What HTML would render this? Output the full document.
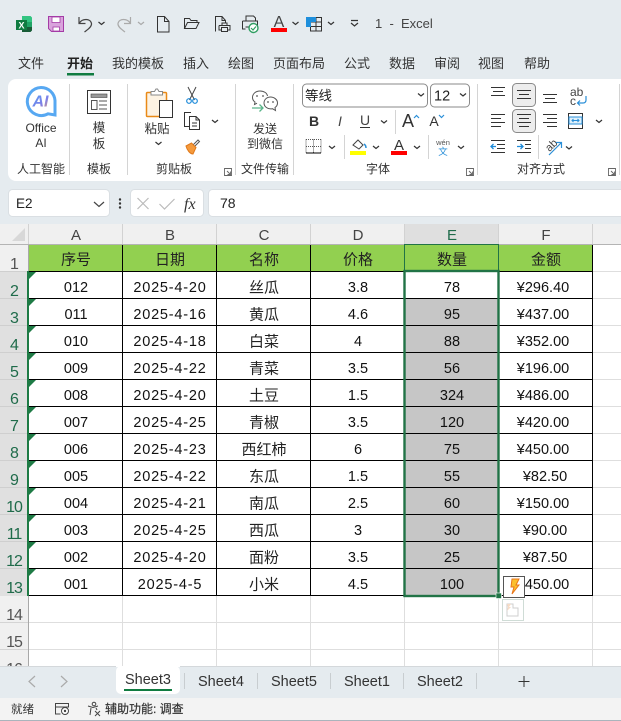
<!DOCTYPE html>
<html><head><meta charset="utf-8"><style>
html,body{margin:0;padding:0;background:#fff;width:621px;height:721px;overflow:hidden}
svg{display:block;position:absolute;left:0;top:0}
text{font-family:"Liberation Sans","Noto Sans CJK SC",sans-serif;fill:#222}
.u{font-size:13px;fill:#333}
.g{font-size:12px;fill:#333}
.c{font-size:14.5px;fill:#111;text-anchor:middle}
.d{letter-spacing:.8px}
.h{font-size:15px;fill:#222;text-anchor:middle}
.r{font-size:16px;letter-spacing:-1px;text-anchor:middle;fill:#1f6b4a}
.n{fill:#555}
.ch{fill:none;stroke:#333;stroke-width:1.2}
.ln{fill:none;stroke:#333;stroke-width:1}
.bk{stroke:#000;stroke-width:1;fill:none}
.gl{stroke:#dedede;stroke-width:1;fill:none}
</style></head><body>
<svg width="621" height="721" viewBox="0 0 621 721" xmlns="http://www.w3.org/2000/svg">
<defs><linearGradient id="ai" x1="0" y1="0" x2="1" y2="1"><stop offset="0" stop-color="#4f9df2"/><stop offset=".6" stop-color="#7f7fe8"/><stop offset="1" stop-color="#e9a06a"/></linearGradient></defs>
<rect width="621" height="224" fill="#e5ebef"/>

<!-- QAT -->
<path d="M22 16h8.500l1.500 1.500v4.500h-10z" fill="#33c481"/><path d="M22 22h10v5h-10z" fill="#21a366"/><path d="M22 27h10v3.500l-1.500 1.500h-8.500z" fill="#185c37"/>
<rect x="16" y="20" width="11" height="10" fill="#107c41"/>
<text x="18.500" y="28.500" style="font-size:9px;font-weight:bold;fill:#fff">X</text>
<path d="M48.500 16.500h15v15h-12l-3-3z" fill="#d9a3dc" stroke="#a43ba6"/>
<rect x="52" y="17" width="8" height="5.500" fill="#fff" stroke="#a43ba6" stroke-width=".8"/>
<rect x="53" y="27" width="6.500" height="4" fill="#fff" stroke="#a43ba6" stroke-width=".8"/>
<path d="M79 17v6.500h6.500M79.500 23C82 18.500 90.500 18 91.500 23.500 92 27 87 30 84.500 32" fill="none" stroke="#444" stroke-width="1.200"/>
<path d="M98.500 22l3 2.500 3-2.500" class="ch"/>
<path d="M130.500 17v6.500h-6.500M130 23C127.500 18.500 119 18 118 23.500 117.500 27 122.500 30 125 32" fill="none" stroke="#aaa" stroke-width="1.200"/>
<path d="M138 22l3 2.500 3-2.500" fill="none" stroke="#aaa" stroke-width="1.200"/>
<path d="M157.500 16.500h7l4.500 5v10.500h-11.500zM164.500 16.500v5h4.500" class="ln"/>
<path d="M184.500 28.500v-10h5l1.500 2h6v2.500M184.500 28.500l3-6h11.500l-3 6z" class="ln"/>
<path d="M215.500 31.500v-15h6.500l3.500 4v3M222 16.500v4h3.500M219 25.500h11v4.500h-2.500M219 25.500v4.500h2.500M221.500 27.500h6v4h-6zM222 25.500v-2.500h5v2.500" class="ln"/>
<path d="M246 21v-5h7.500l2 2v3M242.500 21h15v5M242.500 21v8h3M245.500 27h4" class="ln"/>
<circle cx="253.500" cy="28" r="4.500" fill="#fff" stroke="#2f9e62" stroke-width="1.400"/><path d="M251 28l2 2 3-3.500" fill="none" stroke="#2f9e62" stroke-width="1.200"/>
<text x="279" y="27" style="font-size:16px;fill:#444;text-anchor:middle">A</text>
<rect x="271" y="28" width="16" height="4" fill="#f00"/>
<path d="M292.500 22l3 2.500 3-2.500" class="ch"/>
<path d="M310.500 17.500h11v13.500h-11zM310.500 22h11M310.500 26.500h11M316 17.500v13.500" fill="none" stroke="#333"/>
<path d="M306 17h10v5h-5v5h-5z" fill="#1e8fdc"/>
<path d="M328 22l3 2.500 3-2.500" class="ch"/>
<path d="M351 20.500h7M351 23l3.500 3 3.500-3" class="ch"/>
<text x="375" y="28" style="font-size:13px;fill:#444" xml:space="preserve">1  -  Excel</text>

<!-- menu -->
<text class="u" x="18" y="68">文件</text><text class="u" x="67" y="68" style="font-weight:bold;fill:#222">开始</text><text class="u" x="112" y="68">我的模板</text><text class="u" x="183" y="68">插入</text><text class="u" x="228" y="68">绘图</text><text class="u" x="273" y="68">页面布局</text><text class="u" x="344" y="68">公式</text><text class="u" x="389" y="68">数据</text><text class="u" x="434" y="68">审阅</text><text class="u" x="478" y="68">视图</text><text class="u" x="524" y="68">帮助</text>
<rect x="67" y="73" width="27" height="2.500" fill="#107c41"/>

<!-- ribbon card -->
<rect x="8" y="79" width="625" height="102" rx="8" fill="#fff"/>
<path d="M69.500 84v91M127.500 84v91M235.500 84v91M293.500 84v91M477.500 84v91M619.500 84v91" stroke="#d4d4d4" fill="none"/>
<path d="M395.500 110v24M344.500 135v24M428.500 135v24M538.500 135v24" stroke="#d4d4d4" fill="none"/>

<!-- Office AI -->
<path d="M41 87.500a14 14 0 1 0 7 26.300l7 1.200v-14.500a14 14 0 0 0-14-13z" fill="#fff" stroke="#57a8f2" stroke-width="3"/>
<text x="40.500" y="106.500" style="font-size:16px;font-weight:bold;font-style:italic;fill:url(#ai);text-anchor:middle">AI</text>
<text x="41" y="132" class="g" style="text-anchor:middle">Office</text>
<text x="41" y="147" class="g" style="text-anchor:middle">AI</text>
<text x="17" y="173" class="g">人工智能</text>
<!-- template -->
<rect x="87.500" y="90.500" width="23" height="23" fill="#fff" stroke="#333"/>
<rect x="91" y="94" width="16" height="3.500" fill="#999" stroke="#444" stroke-width=".6"/>
<rect x="91.500" y="100.500" width="5.500" height="9" fill="none" stroke="#555"/>
<path d="M99 101h8M99 105h8M99 109h8" stroke="#555" fill="none"/>
<text x="99" y="132" style="font-size:12.500px;fill:#333;text-anchor:middle">模</text>
<text x="99" y="148" style="font-size:12.500px;fill:#333;text-anchor:middle">板</text>
<text x="87" y="173" class="g">模板</text>
<!-- clipboard -->
<rect x="146.500" y="92.500" width="20" height="24" rx="1" fill="#fdf3e3" stroke="#e98a17" stroke-width="1.500"/>
<path d="M151 93.500v-2h3.500l1.500-2.500h1.500l1.500 2.500h3.500v3.500h-11.500z" fill="#fff" stroke="#888"/>
<rect x="159.500" y="100.500" width="13" height="17" fill="#fff" stroke="#333"/>
<text x="157" y="133" style="font-size:12.500px;fill:#333;text-anchor:middle">粘贴</text>
<path d="M155.500 142l3 2.500 3-2.500" class="ch"/>
<path d="M188 87l6.500 13M196 87l-6.500 13" stroke="#444" fill="none"/>
<circle cx="189" cy="101" r="2.300" fill="none" stroke="#1c8ad9" stroke-width="1.200"/><circle cx="195" cy="101" r="2.300" fill="none" stroke="#1c8ad9" stroke-width="1.200"/>
<path d="M189.500 126.500h-5v-14h6.500" class="ln"/><path d="M189.500 116.500h6.500l3.500 3.500v9.500h-10zM196 116.500v3.500h3.500M192 123h5M192 126h5" class="ln"/>
<path d="M212 120l3 2.500 3-2.500" class="ch"/>
<path d="M193 145l5-5 1.500 1.500-5 5z" fill="#fff" stroke="#555"/>
<path d="M186 146l5.500-3 4.500 4.500-3 6.500c-3 0-6-4-7-8z" fill="#f59a3c" stroke="#e0791a"/>
<text x="156" y="173" class="g">剪贴板</text>
<path d="M224.500 168.500h7v7h-7zM227 171l3 3M230.500 171.500v3h-3" fill="none" stroke="#666" stroke-width=".9"/>
<!-- wechat -->
<path d="M260 91c-4.500 0-7.500 3-7.500 6.500 0 2 1 3.500 2.500 4.500l-.5 2.500 2.500-1.300" fill="none" stroke="#555"/><path d="M260 91c4 0 7 2 7.500 5" fill="none" stroke="#555"/>
<circle cx="257" cy="96" r=".9" fill="#555"/><circle cx="263" cy="96" r=".9" fill="#555"/>
<path d="M270.500 97c3.500 0 7 2.500 7 6 0 2-1 3.500-2.500 4.500l.5 3-3-1.800c-4.500 1-8.500-2-8.500-5.700 0-3.500 3-6 6.500-6z" fill="#fff" stroke="#555"/>
<circle cx="268" cy="102" r=".9" fill="#555"/><circle cx="273" cy="102" r=".9" fill="#555"/>
<path d="M252 108h11M259.500 104.500l3.500 3.500-3.500 3.500" fill="none" stroke="#5ab58a" stroke-width="1.300"/>
<text x="265" y="133" style="font-size:12px;fill:#333;text-anchor:middle">发送</text>
<text x="265" y="148" style="font-size:12px;fill:#333;text-anchor:middle">到微信</text>
<text x="241" y="173" class="g">文件传输</text>

<!-- font -->
<rect x="302.500" y="84" width="125" height="23" rx="4" fill="#fff" stroke="#8a8a8a"/>
<text x="305" y="100.500" style="font-size:13.500px;fill:#222">等线</text>
<path d="M418 93.500l3 2.500 3-2.500" class="ch"/>
<rect x="430.500" y="84" width="39" height="23" rx="4" fill="#fff" stroke="#8a8a8a"/>
<text x="434" y="100.500" style="font-size:14.500px;fill:#222">12</text>
<path d="M460 93.500l3 2.500 3-2.500" class="ch"/>
<text x="314" y="126" style="font-size:14px;font-weight:bold;fill:#333;text-anchor:middle">B</text>
<text x="340" y="126" style="font-size:14px;font-style:italic;fill:#444;text-anchor:middle">I</text>
<text x="365" y="125" style="font-size:14px;fill:#444;text-anchor:middle">U</text><path d="M360 127.500h10" stroke="#333" fill="none"/>
<path d="M381 120.500l3 2.500 3-2.500" class="ch"/>
<text x="408" y="127" style="font-size:18px;fill:#333;text-anchor:middle">A</text><path d="M414 118l2.500-2.500 2.500 2.500" fill="none" stroke="#2a8fd8" stroke-width="1.200"/>
<text x="434" y="126" style="font-size:14px;fill:#333;text-anchor:middle">A</text><path d="M439 115l2.500 2.500 2.500-2.500" fill="none" stroke="#2a8fd8" stroke-width="1.200"/>
<path d="M306 139.500h15M306 146.500h15M306 139.500v13M321 139.500v13M313.500 139.500v13" fill="none" stroke="#555" stroke-dasharray="1 1"/><path d="M306 153h15" stroke="#000" fill="none"/>
<path d="M329 146l3 2.500 3-2.500" class="ch"/>
<path d="M353 145l5-5 5 5-4 4z" fill="#fff" stroke="#444"/><path d="M364 144c1.500 1 2 2.500 2 4" stroke="#2a8fd8" stroke-width="1.500" fill="none"/>
<rect x="350" y="151" width="16" height="4" fill="#ff0"/>
<path d="M373 146l3 2.500 3-2.500" class="ch"/>
<text x="399" y="150" style="font-size:15px;fill:#333;text-anchor:middle">A</text>
<rect x="391" y="151" width="16" height="4" fill="#f00"/>
<path d="M414 146l3 2.500 3-2.500" class="ch"/>
<text x="443" y="145" style="font-size:7.500px;fill:#555;text-anchor:middle">wén</text>
<text x="443" y="155" style="font-size:9.500px;fill:#2a8fd8;text-anchor:middle">文</text>
<path d="M458 146l3 2.500 3-2.500" class="ch"/>
<text x="366" y="173" class="g">字体</text>
<path d="M466.500 168.500h7v7h-7zM469 171l3 3M472.500 171.500v3h-3" fill="none" stroke="#666" stroke-width=".9"/>

<!-- align -->
<rect x="512.500" y="83.500" width="23" height="23" rx="4" fill="#ededed" stroke="#8a8a8a"/>
<rect x="512.500" y="109.500" width="23" height="23" rx="4" fill="#ededed" stroke="#8a8a8a"/>
<path d="M491 87.500h14M493 91.500h10M491 95.500h14" class="ln"/>
<path d="M517 90.500h14M519 94.500h10M517 98.500h14" class="ln"/>
<path d="M543 94.500h14M545 98.500h10M543 102.500h14" class="ln"/>
<path d="M491 114.500h14M491 118.500h10M491 122.500h14M491 126.500h10" class="ln"/>
<path d="M517 114.500h14M519 118.500h10M517 122.500h14M519 126.500h10" class="ln"/>
<path d="M543 114.500h14M547 118.500h10M543 122.500h14M547 126.500h10" class="ln"/>
<text x="570" y="96" style="font-size:12px;fill:#444">ab</text>
<text x="570" y="105" style="font-size:12px;fill:#444">c</text>
<path d="M586 96v4c0 2-1 3-3 3h-5M580 100.500l-2.500 2.500 2.500 2.500" fill="none" stroke="#2a8fd8" stroke-width="1.200"/>
<rect x="568.500" y="113.500" width="14" height="15" fill="#fff" stroke="#333"/>
<rect x="569" y="117" width="13" height="7" fill="#dff0fb" stroke="#2a8fd8"/>
<path d="M572 120.500h7M573.500 119l-1.500 1.500 1.500 1.500M577.500 119l1.500 1.500-1.500 1.500" stroke="#2a8fd8" fill="none"/>
<path d="M596 120l3 2.500 3-2.500" class="ch"/>
<path d="M491 140.500h14M497 144.500h8M497 148.500h8M491 152.500h14" class="ln"/>
<path d="M496 146.500h-5M493.500 144l-2.500 2.500 2.500 2.500" stroke="#1c8ad9" stroke-width="1.300" fill="none"/>
<path d="M517 140.500h14M525 144.500h6M525 148.500h6M517 152.500h14" class="ln"/>
<path d="M517 146.500h6M520.500 144l2.500 2.500-2.500 2.500" stroke="#1c8ad9" stroke-width="1.300" fill="none"/>
<text x="551" y="149" transform="rotate(-45 551 145)" style="font-size:11px;fill:#444;text-anchor:middle">ab</text>
<path d="M549 155l12-12M556 142.500h5.500v5.500" fill="none" stroke="#2a8fd8" stroke-width="1.200"/>
<path d="M566 146.500l3 2.500 3-2.500" class="ch"/>
<text x="517" y="173" class="g">对齐方式</text>
<path d="M608.500 168.500h7v7h-7zM611 171l3 3M614.500 171.500v3h-3" fill="none" stroke="#666" stroke-width=".9"/>

<!-- formula bar -->
<rect x="8.500" y="189.500" width="101" height="27" rx="4" fill="#fff" stroke="#dadfe3"/>
<text x="16" y="208" style="font-size:13.500px;fill:#222">E2</text>
<path d="M94 202l5 4.500 5-4.500" fill="none" stroke="#444" stroke-width="1.200"/>
<circle cx="120" cy="199.500" r="1.200" fill="#333"/><circle cx="120" cy="203.500" r="1.200" fill="#333"/><circle cx="120" cy="207.500" r="1.200" fill="#333"/>
<rect x="130.500" y="189.500" width="73" height="27" rx="4" fill="#fff" stroke="#dadfe3"/>
<path d="M137.500 198l11 11M148.500 198l-11 11" stroke="#bbb" stroke-width="1.200" fill="none"/>
<path d="M159.500 204l5 5 10-10" stroke="#bbb" stroke-width="1.200" fill="none"/>
<text x="184" y="209" style="font-size:16px;font-style:italic;font-family:'Liberation Serif',serif;fill:#333">fx</text>
<rect x="208.500" y="189.500" width="420" height="27" rx="4" fill="#fff" stroke="#dadfe3"/>
<text x="220" y="208" style="font-size:14px;fill:#222">78</text>

<!-- sheet headers -->
<rect x="0" y="224" width="621" height="21" fill="#f0f0f0"/>
<rect x="0" y="245" width="28" height="422" fill="#f0f0f0"/>
<rect x="0" y="271" width="27" height="325" fill="#e0e0e0"/>
<rect x="405" y="224" width="93" height="20" fill="#dfdfdf"/>
<path d="M12 241h13v-13z" fill="#d8d8d8"/>
<path d="M28.500 224v21M122.500 224v21M216.500 224v21M310.500 224v21M404.500 224v21M498.500 224v21M592.500 224v21" stroke="#d2d2d2" fill="none"/>
<path d="M0 244.500h621" stroke="#b4b4b4" fill="none"/>
<path d="M28.500 245v422" stroke="#a8a8a8" fill="none"/>
<text x="76" y="240" style="font-size:15px;fill:#444;text-anchor:middle">A</text><text x="170" y="240" style="font-size:15px;fill:#444;text-anchor:middle">B</text><text x="264" y="240" style="font-size:15px;fill:#444;text-anchor:middle">C</text><text x="358" y="240" style="font-size:15px;fill:#444;text-anchor:middle">D</text><text x="452" y="240" style="font-size:15px;fill:#1f6b4a;text-anchor:middle">E</text><text x="546" y="240" style="font-size:15px;fill:#444;text-anchor:middle">F</text>
<text class="r n" x="14" y="269">1</text>
<text class="r" x="14" y="296">2</text><text class="r" x="14" y="323">3</text><text class="r" x="14" y="350">4</text><text class="r" x="14" y="377">5</text><text class="r" x="14" y="404">6</text><text class="r" x="14" y="431">7</text><text class="r" x="14" y="458">8</text><text class="r" x="14" y="485">9</text><text class="r" x="14" y="512">10</text><text class="r" x="14" y="539">11</text><text class="r" x="14" y="566">12</text><text class="r" x="14" y="593">13</text>
<text class="r n" x="14" y="620">14</text><text class="r n" x="14" y="647">15</text><text class="r n" x="14" y="674">16</text>

<!-- grid below and right -->
<path d="M29 622.500h592M29 649.500h592M29 595.500h592M122.500 596v71M216.500 596v71M310.500 596v71M404.500 596v71M498.500 596v71M592.500 596v71" class="gl"/>
<path d="M593 271.500h28M593 298.500h28M593 325.500h28M593 352.500h28M593 379.500h28M593 406.500h28M593 433.500h28M593 460.500h28M593 487.500h28M593 514.500h28M593 541.500h28M593 568.500h28" class="gl"/>
<path d="M0 622.500h28M0 649.500h28" stroke="#d4d4d4" fill="none"/>
<path d="M0 271.500h28M0 298.500h28M0 325.500h28M0 352.500h28M0 379.500h28M0 406.500h28M0 433.500h28M0 460.500h28M0 487.500h28M0 514.500h28M0 541.500h28M0 568.500h28" stroke="#cfcfcf" fill="none"/>

<!-- table -->
<rect x="29" y="245" width="564" height="26" fill="#92d050"/>
<rect x="405" y="298" width="93" height="297" fill="#c6c6c6"/>
<path d="M29 271.500h564M29 298.500h564M29 325.500h564M29 352.500h564M29 379.500h564M29 406.500h564M29 433.500h564M29 460.500h564M29 487.500h564M29 514.500h564M29 541.500h564M29 568.500h564M29 595.500h564M122.500 245v351M216.500 245v351M310.500 245v351M404.500 245v351M498.500 245v351M592.500 245v351" class="bk"/>

<text class="h" x="76" y="264.500">序号</text><text class="h" x="170" y="264.500">日期</text><text class="h" x="264" y="264.500">名称</text><text class="h" x="358" y="264.500">价格</text><text class="h" x="452" y="264.500">数量</text><text class="h" x="546" y="264.500">金额</text>

<text class="c" x="76" y="292">012</text><text class="c d" x="170" y="292">2025-4-20</text><text class="h" x="264" y="292.500">丝瓜</text><text class="c" x="358" y="292">3.8</text><text class="c" x="452" y="292">78</text><text class="c" x="543" y="292">¥296.40</text>
<text class="c" x="76" y="319">011</text><text class="c d" x="170" y="319">2025-4-16</text><text class="h" x="264" y="319.500">黄瓜</text><text class="c" x="358" y="319">4.6</text><text class="c" x="452" y="319">95</text><text class="c" x="543" y="319">¥437.00</text>
<text class="c" x="76" y="346">010</text><text class="c d" x="170" y="346">2025-4-18</text><text class="h" x="264" y="346.500">白菜</text><text class="c" x="358" y="346">4</text><text class="c" x="452" y="346">88</text><text class="c" x="543" y="346">¥352.00</text>
<text class="c" x="76" y="373">009</text><text class="c d" x="170" y="373">2025-4-22</text><text class="h" x="264" y="373.500">青菜</text><text class="c" x="358" y="373">3.5</text><text class="c" x="452" y="373">56</text><text class="c" x="543" y="373">¥196.00</text>
<text class="c" x="76" y="400">008</text><text class="c d" x="170" y="400">2025-4-20</text><text class="h" x="264" y="400.500">土豆</text><text class="c" x="358" y="400">1.5</text><text class="c" x="452" y="400">324</text><text class="c" x="543" y="400">¥486.00</text>
<text class="c" x="76" y="427">007</text><text class="c d" x="170" y="427">2025-4-25</text><text class="h" x="264" y="427.500">青椒</text><text class="c" x="358" y="427">3.5</text><text class="c" x="452" y="427">120</text><text class="c" x="543" y="427">¥420.00</text>
<text class="c" x="76" y="454">006</text><text class="c d" x="170" y="454">2025-4-23</text><text class="h" x="264" y="454.500">西红柿</text><text class="c" x="358" y="454">6</text><text class="c" x="452" y="454">75</text><text class="c" x="543" y="454">¥450.00</text>
<text class="c" x="76" y="481">005</text><text class="c d" x="170" y="481">2025-4-22</text><text class="h" x="264" y="481.500">东瓜</text><text class="c" x="358" y="481">1.5</text><text class="c" x="452" y="481">55</text><text class="c" x="545" y="481">¥82.50</text>
<text class="c" x="76" y="508">004</text><text class="c d" x="170" y="508">2025-4-21</text><text class="h" x="264" y="508.500">南瓜</text><text class="c" x="358" y="508">2.5</text><text class="c" x="452" y="508">60</text><text class="c" x="543" y="508">¥150.00</text>
<text class="c" x="76" y="535">003</text><text class="c d" x="170" y="535">2025-4-25</text><text class="h" x="264" y="535.500">西瓜</text><text class="c" x="358" y="535">3</text><text class="c" x="452" y="535">30</text><text class="c" x="545" y="535">¥90.00</text>
<text class="c" x="76" y="562">002</text><text class="c d" x="170" y="562">2025-4-20</text><text class="h" x="264" y="562.500">面粉</text><text class="c" x="358" y="562">3.5</text><text class="c" x="452" y="562">25</text><text class="c" x="545" y="562">¥87.50</text>
<text class="c" x="76" y="589">001</text><text class="c d" x="170" y="589">2025-4-5</text><text class="h" x="264" y="589.500">小米</text><text class="c" x="358" y="589">4.5</text><text class="c" x="452" y="589">100</text><text class="c" x="543" y="589">¥450.00</text>

<!-- green triangles -->
<g fill="#1e7b45">
<path d="M29 272h7l-7 7z"/><path d="M29 299h7l-7 7z"/><path d="M29 326h7l-7 7z"/><path d="M29 353h7l-7 7z"/><path d="M29 380h7l-7 7z"/><path d="M29 407h7l-7 7z"/><path d="M29 434h7l-7 7z"/><path d="M29 461h7l-7 7z"/><path d="M29 488h7l-7 7z"/><path d="M29 515h7l-7 7z"/><path d="M29 542h7l-7 7z"/><path d="M29 569h7l-7 7z"/>
</g>
<rect x="27" y="271" width="2" height="325" fill="#1e7b45"/>

<!-- selection -->
<rect x="404.500" y="244.500" width="94" height="27" fill="none" stroke="#217346"/>
<rect x="404.500" y="271" width="94" height="325" fill="none" stroke="#217346" stroke-width="2.400"/>
<rect x="496" y="593" width="5.500" height="5.500" fill="#217346" stroke="#fff" stroke-width=".6"/>

<!-- flash fill -->
<rect x="503.500" y="576.500" width="21" height="21" fill="#fff" stroke="#555"/>
<path d="M512 579h7l-3 6h3l-7 9 2-7h-3z" fill="#fbc02d" stroke="#e8761a"/>
<rect x="502.500" y="599.500" width="21" height="21" fill="#fff" stroke="#cfdcd6"/>
<path d="M507 604h6v4h5v8h-11z" fill="none" stroke="#cfcfcf"/><path d="M507 604h4l-2 3h2l-4 4 1-4z" fill="#f8dcc6"/>

<!-- tabs -->
<rect x="0" y="667" width="621" height="31" fill="#e5ebef"/>
<rect x="116" y="666" width="64" height="28" rx="5" fill="#fff"/>
<path d="M0 666.500h116M180 666.500h441" stroke="#d4d8db" fill="none"/>
<path d="M35 676l-6 5.500 6 5.500" fill="none" stroke="#aaa" stroke-width="1.200"/>
<path d="M61 676l6 5.500-6 5.500" fill="none" stroke="#aaa" stroke-width="1.200"/>
<text x="125" y="684" style="font-size:14.500px;fill:#333">Sheet3</text>
<rect x="124" y="689" width="48" height="2" fill="#107c41"/>
<path d="M184.500 673v16M257.500 673v16M330.500 673v16M403.500 673v16M476.500 673v16" stroke="#c8cdd0" fill="none"/>
<text x="198" y="686" style="font-size:14.500px;fill:#333">Sheet4</text>
<text x="271" y="686" style="font-size:14.500px;fill:#333">Sheet5</text>
<text x="344" y="686" style="font-size:14.500px;fill:#333">Sheet1</text>
<text x="417" y="686" style="font-size:14.500px;fill:#333">Sheet2</text>
<path d="M518.500 681.500h11M524 676v11" stroke="#333" fill="none"/>

<!-- status -->
<rect x="0" y="698" width="621" height="22" fill="#f3f3f3"/>
<rect x="0" y="720" width="621" height="1" fill="#aab4bc"/>
<text x="11" y="713" style="font-size:11.500px;fill:#333">就绪</text>
<path d="M55.500 703.500h13v3.500h-13zM55.500 707v7h5" fill="none" stroke="#444"/><circle cx="65" cy="711" r="3.500" fill="#fff" stroke="#444"/><circle cx="65" cy="711" r="1.200" fill="#444"/>
<circle cx="94" cy="704" r="1.800" fill="none" stroke="#444"/><path d="M88 706l5 1.500 5-1.500M91 708l-1 7M96 708l1 2" fill="none" stroke="#444"/><path d="M95 711l5 5M100 711l-5 5" stroke="#444" fill="none"/>
<text x="105" y="713" style="font-size:12px;fill:#333;stroke:#333;stroke-width:.2">辅助功能: 调查</text>
</svg>
</body></html>
